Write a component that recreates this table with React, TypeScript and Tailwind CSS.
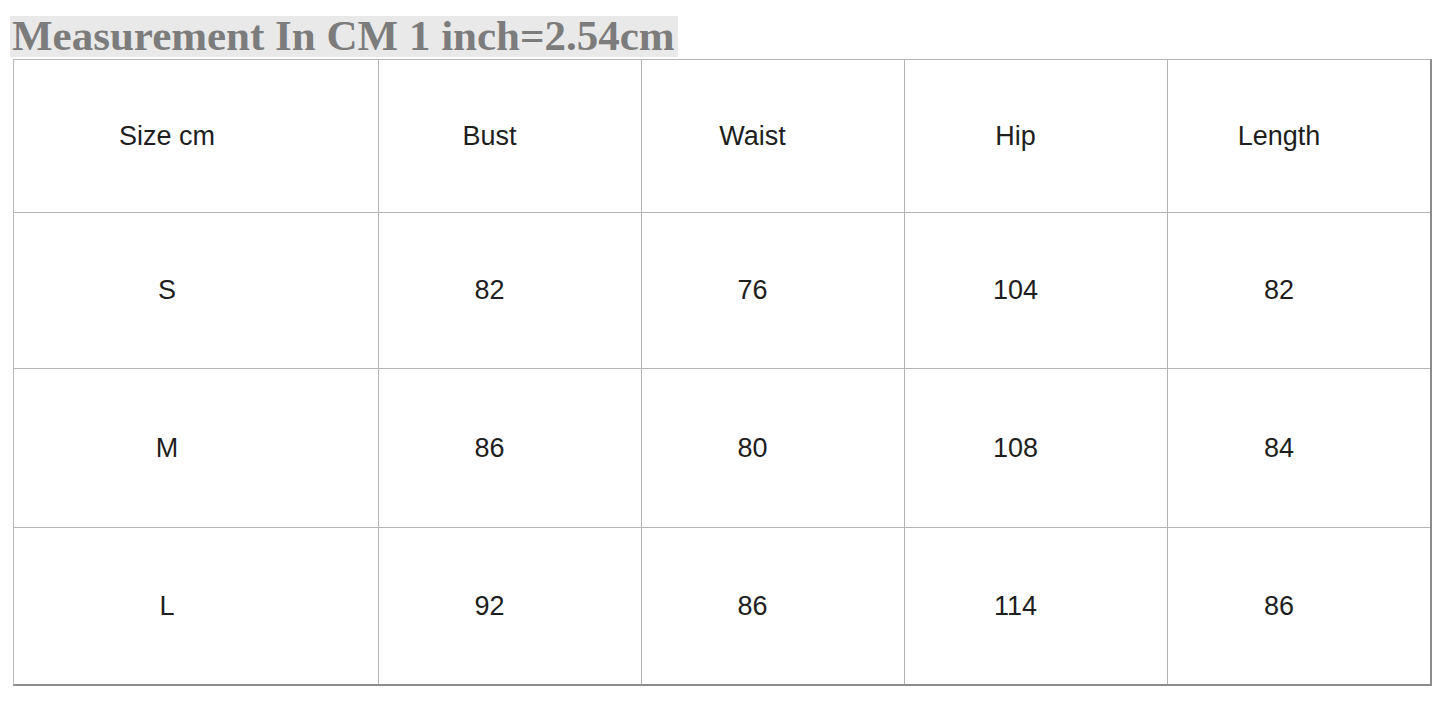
import React from "react";

const header = ["Size cm", "Bust", "Waist", "Hip", "Length"];
const rows = [
  ["S", "82", "76", "104", "82"],
  ["M", "86", "80", "108", "84"],
  ["L", "92", "86", "114", "86"],
];

const rowH = ["h-[153px]", "h-[156px]", "h-[159px]", "h-[156px]"];

function Cell({ text, col, row }: { text: string; col: number; row: number }) {
  const w = col === 0 ? "w-[365px] pr-[58px]" : col === 4 ? "w-[262px] pr-[40px]" : "w-[263px] pr-[41px]";
  const br = col < 4 ? "border-r border-[#b4b4b4]" : "";
  const bb = row < 3 ? "border-b border-[#b4b4b4]" : "";
  return (
    <div className={`${w} ${rowH[row]} ${br} ${bb} flex items-center justify-center text-[27px] text-[#1e1e1e]`}>
      {text}
    </div>
  );
}

export default function App() {
  const all = [header, ...rows];
  return (
    <div className="w-[1445px] h-[713px] bg-white overflow-hidden" style={{ fontFamily: '"Liberation Sans", Arial, sans-serif' }}>
      <div className="pt-[16px] pl-[10px]">
        <div
          className="w-[668px] h-[41px] bg-[#e9e9e9] pl-[2px] text-[43px] leading-[40px] font-bold text-[#7c7c7c] whitespace-nowrap"
          style={{ fontFamily: '"Liberation Serif", "Times New Roman", serif' }}
        >
          Measurement In CM 1 inch=2.54cm
        </div>
      </div>
      <div className="mt-[2px] ml-[13px] w-[1419px] border-l border-t border-[#b8b8b8] border-r-2 border-b-2 border-r-[#8c8c8c] border-b-[#8c8c8c]">
        {all.map((r, ri) => (
          <div key={ri} className="flex">
            {r.map((t, ci) => (
              <Cell key={ci} text={t} col={ci} row={ri} />
            ))}
          </div>
        ))}
      </div>
    </div>
  );
}
